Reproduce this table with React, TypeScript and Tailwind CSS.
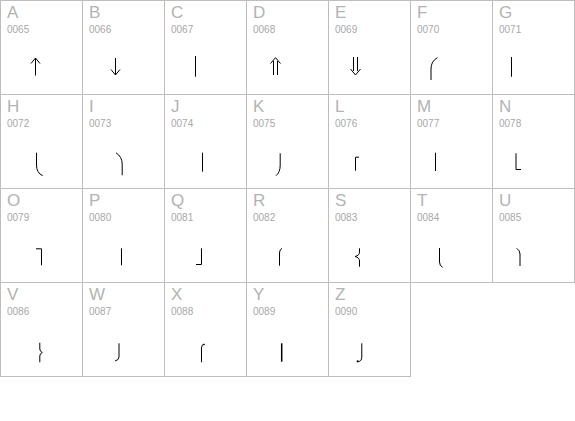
import React from 'react'

const letters = 'ABCDEFGHIJKLMNOPQRSTUVWXYZ'.split('')

// glyph strokes, in cell coordinates (cell is 81 x 93)
const glyphs: Record<string, React.ReactNode> = {
  A: <><path d="M34.5 57V74.5" /><path d="M30 62.5L34.5 57L39 62.5" /></>,
  B: <><path d="M32.5 57V74" /><path d="M28 68.5L32.5 74L37 68.5" /></>,
  C: <path d="M30.5 55V75.7" />,
  D: <><path d="M26.5 60V74" /><path d="M30.5 60V74" /><path d="M23.5 62.5L28.5 56.7L33.5 62.5" /></>,
  E: <><path d="M24.5 56V70" /><path d="M28.5 56V70" /><path d="M21.5 68L26.5 74L31.5 68" /></>,
  F: <path d="M20 79V68Q20 60 26.5 56.7" />,
  G: <path d="M18.5 56V75.7" />,
  H: <path d="M35.5 57.7V70Q35.5 78 41.7 80.7" />,
  I: <path d="M33 57.7Q39.2 62 39.2 69V80.3" />,
  J: <path d="M37.5 57.7V76.7" />,
  K: <path d="M33.2 58.3V70Q33.2 77.5 29 80.7" />,
  L: <path d="M30 62.2H26.5V75.7" />,
  M: <path d="M24.5 57.7V76" />,
  N: <path d="M23 58.3V74.5H28" />,
  O: <path d="M35 59.8H40.5V76.3" />,
  P: <path d="M38.5 59.3V76.3" />,
  Q: <path d="M36.5 59.3V75.5H31" />,
  R: <path d="M32.5 76.7V64Q32.5 60.5 35 59.3" />,
  S: <path d="M30.5 59.3V63Q30.5 66.5 26 67.5Q30.5 68.5 30.5 72V77.7" />,
  T: <path d="M28.5 59V73Q28.5 77 31.7 78.3" />,
  U: <path d="M23.7 59.3Q27 61.5 27 65V77" />,
  V: <path d="M38.8 59.7V66Q38.8 68.5 41.3 69.5Q38.8 70.5 38.8 73V79.3" />,
  W: <path d="M36 60.3V74Q36 77 32 78" />,
  X: <><path d="M36.5 79.3V65Q36.5 61.5 39 61" /><circle cx="39" cy="61.6" r="0.8" fill="#000" stroke="none" /></>,
  Y: <path d="M34.7 60.3V78.7" strokeWidth="1.5" />,
  Z: <><path d="M32.8 60.3V74Q32.8 78.5 28.5 78.8" /><circle cx="28.6" cy="78.2" r="1" fill="#000" stroke="none" /></>,
}

export default function App() {
  return (
    <div className="min-h-screen bg-white font-['Liberation_Sans',Arial,sans-serif]">
      <div className="grid w-fit grid-cols-[repeat(7,82px)] auto-rows-[94px] border-l border-t border-[#bdbdbd]">
        {letters.map(l => (
          <div key={l} className="flex flex-col border-r border-b border-[#bdbdbd]">
            <div className="h-[40px] pl-[6px] pt-[3px]">
              <div className="text-[17px] leading-[17px] text-[#b3b3b3]">{l}</div>
              <div className="mt-[4px] text-[10px] leading-[10px] text-[#a8a8a8]">{'00' + l.charCodeAt(0)}</div>
            </div>
            <svg width="81" height="53" viewBox="0 40 81 53" fill="none" stroke="#000" strokeWidth="1">
              {glyphs[l]}
            </svg>
          </div>
        ))}
      </div>
    </div>
  )
}
